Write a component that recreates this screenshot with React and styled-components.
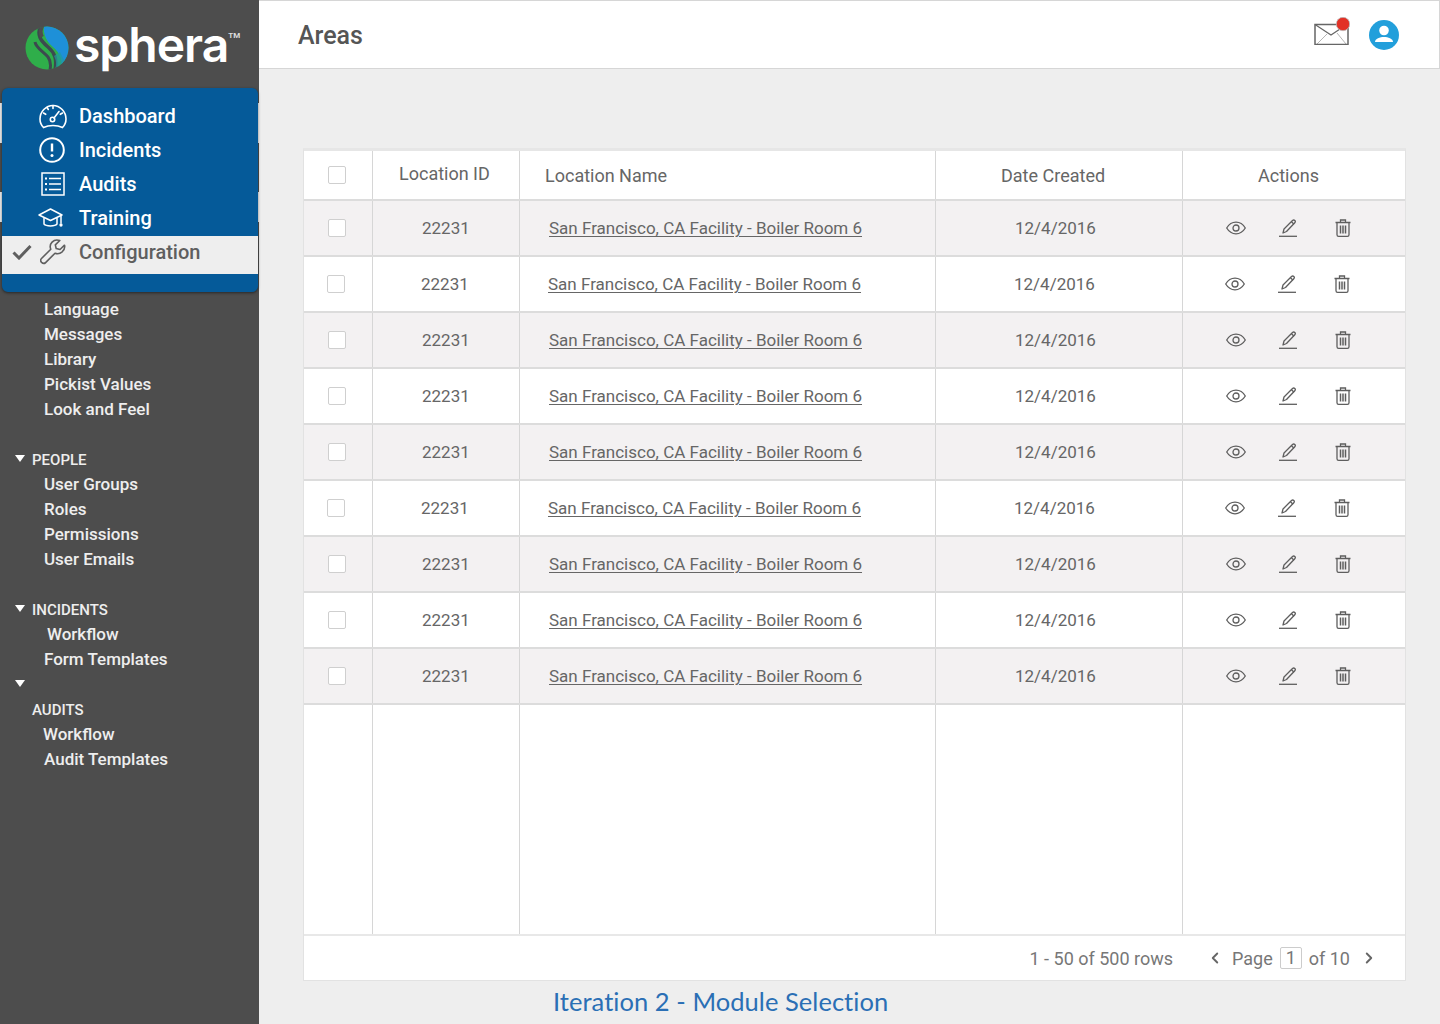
import React from "react";
import styled, { createGlobalStyle } from "styled-components";
import { ChevronLeft, ChevronRight } from "lucide-react";

const GlobalStyle = createGlobalStyle`
  html, body {
    margin: 0;
    padding: 0;
    background: #eeeeee;
    font-family: Roboto, "Liberation Sans", sans-serif;
  }
  * {
    box-sizing: border-box;
  }
`;

const Page = styled.div`
  display: flex;
  width: 1440px;
  height: 1024px;
  overflow: hidden;
  background: #eeeeee;
`;

const Sidebar = styled.aside`
  flex: 0 0 259px;
  background: #4d4d4d;
  color: #f0f0f0;
`;

const LogoBar = styled.div`
  display: flex;
  align-items: center;
  height: 88px;
  padding: 7px 0 0 25px;
`;

const LogoWord = styled.span`
  margin: -6px 0 0 5px;
  font-family: Inter, sans-serif;
  font-size: 48px;
  font-weight: 600;
  letter-spacing: -1px;
  line-height: 60px;
  color: #ffffff;
`;

const LogoMark = styled.sup`
  align-self: flex-start;
  margin: 24px 0 0 0;
  font-size: 8px;
  font-weight: 700;
  line-height: 10px;
  color: #dddddd;
`;

const MenuBack = styled.div`
  padding: 0 1px 0 2px;
  background: linear-gradient(
    to bottom,
    #4d4d4d 0 15px,
    #eeeeee 15px 55px,
    #4d4d4d 55px 104px,
    #eeeeee 104px 134px,
    #4d4d4d 134px
  );
`;

const MainMenu = styled.nav`
  height: 204px;
  padding-top: 11px;
  border-radius: 6px;
  background: #055a99;
  box-shadow: 0 1px 3px rgba(0, 0, 0, 0.5);
`;

const MenuItem = styled.a`
  display: flex;
  align-items: center;
  height: ${(props) => (props.$active ? "38px" : "34px")};
  margin-top: ${(props) => (props.$active ? "1px" : "0")};
  padding-bottom: ${(props) => (props.$active ? "6px" : "0")};
  background: ${(props) => (props.$active ? "#eeeeee" : "transparent")};
  color: ${(props) => (props.$active ? "#5f5f5f" : "#ffffff")};
  font-size: 20px;
  font-weight: 500;
`;

const CheckSlot = styled.span`
  display: flex;
  justify-content: center;
  width: 36px;
  padding-left: 4px;
`;

const MenuIcon = styled.span`
  display: flex;
  align-items: center;
  justify-content: center;
  width: 30px;
  margin-right: 11px;
`;

const SubNav = styled.div`
  padding-top: 5px;
`;

const SubGroup = styled.div`
  margin-bottom: ${(props) => (props.$tight ? "0" : "25px")};
`;

const SubItem = styled.a`
  display: block;
  height: 25px;
  padding-left: ${(props) => props.$indent || 44}px;
  font-size: 17px;
  font-weight: 500;
  line-height: 25px;
  color: #eeeeee;
`;

const GroupHead = styled.div`
  display: flex;
  align-items: center;
  height: 25px;
  padding-left: 15px;
  font-size: 15px;
  font-weight: 500;
  color: #eeeeee;
`;

const Caret = styled.span`
  flex: 0 0 auto;
  width: 0;
  height: 0;
  margin: -3px 7px 0 0;
  border-left: 5px solid transparent;
  border-right: 5px solid transparent;
  border-top: 7px solid #ffffff;
`;

const CaretGap = styled.span`
  flex: 0 0 17px;
`;

const Main = styled.main`
  display: flex;
  flex: 1;
  flex-direction: column;
  min-width: 0;
`;

const TopBar = styled.header`
  display: flex;
  align-items: center;
  justify-content: space-between;
  height: 69px;
  padding: 0 40px 0 39px;
  background: #ffffff;
  border: 1px solid #d6d6d6;
  border-left: 0;
`;

const Title = styled.h1`
  margin: 1px 0 0;
  font-size: 25px;
  font-weight: 500;
  color: #555555;
`;

const TopIcons = styled.div`
  display: flex;
  align-items: center;
  gap: 19px;
`;

const MailSlot = styled.span`
  display: flex;
  margin-bottom: 8px;
`;

const Content = styled.div`
  flex: 1;
  padding: 79px 34px 0 44px;
`;

const TableCard = styled.section`
  display: flex;
  flex-direction: column;
  height: 833px;
  background: #ffffff;
  border: 1px solid #e2e2e2;
  border-top: 3px solid #e6e6e6;
`;

const columns = "69px 147px 416px 247px 1fr";

const HeadRow = styled.div`
  display: grid;
  grid-template-columns: ${columns};
  flex: 0 0 50px;
  border-bottom: 2px solid #dcdcdc;
`;

const BodyRow = styled.div`
  display: grid;
  grid-template-columns: ${columns};
  flex: 0 0 56px;
  background: ${(props) => (props.$shade ? "#f3f1f2" : "#ffffff")};
  border-bottom: 2px solid #dcdcdc;
`;

const FillRow = styled.div`
  display: grid;
  grid-template-columns: ${columns};
  flex: 1;
  border-bottom: 2px solid #e8e8e8;
`;

const Cell = styled.div`
  display: flex;
  align-items: center;
  padding-left: ${(props) => props.$pad - (props.$shift || 0)}px;
  padding-bottom: ${(props) => props.$lift || 0}px;
  border-right: 1px solid #d6d6d6;
  font-size: ${(props) => (props.$head ? "18px" : "17px")};
  color: #666666;

  &:last-child {
    border-right: 0;
  }
`;

const Check = styled.span`
  display: block;
  width: 18px;
  height: 18px;
  background: #ffffff;
  border: 1px solid #cfcfcf;
  border-radius: 2px;
`;

const NameLink = styled.a`
  color: #666666;
  text-decoration: underline;
  text-underline-offset: 2px;
  text-decoration-thickness: 1px;
`;

const ActionIcons = styled.div`
  display: flex;
  align-items: center;
`;

const ActionGap = styled.span`
  width: ${(props) => props.$width}px;
`;

const Footer = styled.div`
  display: flex;
  flex: 0 0 44px;
  align-items: center;
  justify-content: flex-end;
  padding-right: 27px;
  font-size: 18px;
  color: #777777;
`;

const RowCount = styled.span`
  margin-right: 33px;
`;

const PageNum = styled.span`
  display: inline-block;
  width: 22px;
  height: 22px;
  margin: 0 7px;
  border: 1px solid #cccccc;
  border-radius: 2px;
  line-height: 20px;
  text-align: center;
`;

const Pager = styled.div`
  display: flex;
  align-items: center;
`;

const PagerArrow = styled.span`
  display: flex;
  margin: ${(props) => (props.$next ? "0 0 0 10px" : "0 8px 0 0")};
  color: #666666;
`;

const Caption = styled.div`
  padding: 5px 0 0 250px;
  font-family: Lato, sans-serif;
  font-size: 25.5px;
  letter-spacing: 0.05px;
  color: #2a6fb5;
`;

function Globe() {
  return (
    <svg width="44" height="44" viewBox="0 0 44 44">
      <defs>
        <clipPath id="globeClip">
          <circle cx="22" cy="22" r="21.500" />
        </clipPath>
      </defs>
      <g clipPath="url(#globeClip)">
        <rect width="44" height="44" fill="#2fae4a" />
        <path d="M19 0h25v44h-8c2-10-1-17-8-23-6-5-10-12-9-21z" fill="#1e90d8" />
        <path d="M16 -1C11 9 16 15 23 21c7 6 9 12 7 23" fill="none" stroke="#3c4a4f" strokeWidth="3.500" />
        <path d="M10 16c1 6 8 9 13 15 3 4 3 8 2 13" fill="none" stroke="#3c4a4f" strokeWidth="3" />
        <path d="M18 -2c-3 6-3 9-1 13" fill="none" stroke="#4d4d4d" strokeWidth="4" />
        <path d="M30 44c2-6 1-10-1-14l6-4 9 18z" fill="#1f9aa0" opacity="0.7" />
      </g>
    </svg>
  );
}

function GaugeIcon() {
  return (
    <svg width="28" height="25" viewBox="0 0 28 25" fill="none" stroke="#fff" strokeWidth="1.600" strokeLinecap="round">
      <path d="M4.500 23.500C2.300 21.300 1 18.300 1 15 1 7.800 6.800 1.500 14 1.500S27 7.800 27 15c0 3.300-1.300 6.300-3.500 8.500C21 22.300 17.700 21.500 14 21.500s-7 .8-9.500 2z" />
      <circle cx="13.500" cy="15.500" r="2.200" />
      <path d="M15 14 20 7.500M14 1.500v3M4.500 9l2.200 1.300M23.500 9l-2.200 1.300M8 3.500l1.300 2" />
    </svg>
  );
}

function AlertIcon() {
  return (
    <svg width="28" height="26" viewBox="0 0 28 26" fill="none" stroke="#fff" strokeWidth="2">
      <circle cx="13" cy="13" r="11.800" />
      <path d="M13 6.500v8" strokeWidth="2.400" />
      <circle cx="13" cy="18.500" r="1.500" fill="#fff" stroke="none" />
    </svg>
  );
}

function ListIcon() {
  return (
    <svg width="24" height="24" viewBox="0 0 24 24" fill="none" stroke="#fff" strokeWidth="1.500">
      <rect x="1" y="1" width="22" height="22" />
      <path d="M8 6.500h12M8 12h12M8 17.500h12" />
      <path d="M4 6.500h2M4 12h2M4 17.500h2" strokeWidth="2" />
    </svg>
  );
}

function CapIcon() {
  return (
    <svg width="30" height="20" viewBox="0 0 30 20" fill="none" stroke="#fff" strokeWidth="1.500" strokeLinejoin="round">
      <path d="M1 7 12.500 1 24 7l-11.500 5.500z" />
      <path d="M6 10v6c2 2.500 11 2.500 13 0v-6" />
      <path d="M23 7.500v8" />
      <circle cx="23" cy="17" r="0.900" fill="#fff" />
    </svg>
  );
}

function WrenchIcon() {
  return (
    <svg width="26" height="26" viewBox="0 0 26 26" fill="none" stroke="#5f5f5f" strokeWidth="1.600" strokeLinejoin="round">
      <path d="M24.500 6.200 20 10.500l-3.800-1-.9-3.600L19.800 1.500c-2.800-1-5.800-.4-7.700 1.600-1.900 2-2.300 4.800-1.300 7.100L1.500 19.500c-1 1-1 2.700.1 3.900 1.200 1.200 3 1.200 4 .2l9.400-9.400c2.300.9 5.100.5 7.200-1.400 2-2 2.800-4.800 2.300-6.600z" />
    </svg>
  );
}

function CheckMark() {
  return (
    <svg width="20" height="16" viewBox="0 0 20 16" fill="none" stroke="#5f5f5f" strokeWidth="3">
      <path d="M1.500 8.500 7 14 18.500 2" />
    </svg>
  );
}

function MailIcon() {
  return (
    <svg width="36" height="28" viewBox="0 0 36 28">
      <path d="M3 27 13 17M32 27 23 16" fill="none" stroke="#b5b5b5" strokeWidth="1" />
      <path d="M1 7.500h33v20H1z" fill="none" stroke="#666" strokeWidth="1.500" />
      <path d="M1 7.500 17 18l12-8" fill="none" stroke="#666" strokeWidth="1.200" />
      <circle cx="29" cy="7" r="6.700" fill="#e23126" stroke="#bbb" strokeWidth="0.800" />
    </svg>
  );
}

function UserIcon() {
  return (
    <svg width="30" height="30" viewBox="0 0 30 30">
      <circle cx="15" cy="15" r="15" fill="#229fdb" />
      <circle cx="15" cy="10.500" r="4.800" fill="#fff" />
      <path d="M6 22c0-3.500 5-5 9-5s9 1.500 9 5z" fill="#fff" />
    </svg>
  );
}

function EyeIcon() {
  return (
    <svg width="20" height="14" viewBox="0 0 20 14" fill="none" stroke="#5e5e5e" strokeWidth="1.300">
      <path d="M.7 7C3 3.200 6.300 1.200 10 1.200S17 3.200 19.300 7C17 10.800 13.700 12.800 10 12.800S3 10.800.7 7z" />
      <circle cx="10" cy="7" r="3" />
    </svg>
  );
}

function PencilIcon() {
  return (
    <svg width="18" height="18" viewBox="0 0 18 18" fill="none" stroke="#5e5e5e" strokeWidth="1.300" strokeLinejoin="round">
      <path d="M4 14 5 10 13.500 1.500c.7-.6 1.700-.6 2.300 0 .6.600.6 1.600 0 2.200L7.500 12.500z" />
      <path d="M12.500 2.800 15 5.200" />
      <path d="M0 17.300h18" />
    </svg>
  );
}

function TrashIcon() {
  return (
    <svg width="16" height="18" viewBox="0 0 16 18" fill="none" stroke="#5e5e5e" strokeWidth="1.300">
      <path d="M.5 3.500h15M5.500 3.500V1h5v2.500" />
      <path d="M2 3.500v12.200c0 1 .7 1.600 1.600 1.600h8.800c.9 0 1.600-.6 1.600-1.600V3.500" />
      <path d="M5.500 6.500v8M8 6.500v8M10.500 6.500v8" strokeWidth="1.500" />
    </svg>
  );
}

const subGroups = [
  { items: [["Language"], ["Messages"], ["Library"], ["Pickist Values"], ["Look and Feel"]] },
  { head: "PEOPLE", caret: true, items: [["User Groups"], ["Roles"], ["Permissions"], ["User Emails"]] },
  { head: "INCIDENTS", caret: true, tight: true, items: [["Workflow", 47], ["Form Templates"]] },
  { loneCaret: true, tight: true, items: [] },
  { head: "AUDITS", items: [["Workflow", 43], ["Audit Templates"]] },
];

const menu = [
  ["Dashboard", <GaugeIcon />],
  ["Incidents", <AlertIcon />],
  ["Audits", <ListIcon />],
  ["Training", <CapIcon />],
];

// the mock has rows 2 and 6 sitting one pixel to the left
const rows = [0, 1, 0, 0, 0, 1, 0, 0, 0];

export default function App() {
  return (
    <Page>
      <GlobalStyle />
      <Sidebar>
        <LogoBar>
          <Globe />
          <LogoWord>sphera</LogoWord>
          <LogoMark>TM</LogoMark>
        </LogoBar>
        <MenuBack>
          <MainMenu>
            {menu.map(([label, icon]) => (
              <MenuItem key={label}>
                <CheckSlot />
                <MenuIcon>{icon}</MenuIcon>
                {label}
              </MenuItem>
            ))}
            <MenuItem $active>
              <CheckSlot>
                <CheckMark />
              </CheckSlot>
              <MenuIcon>
                <WrenchIcon />
              </MenuIcon>
              Configuration
            </MenuItem>
          </MainMenu>
        </MenuBack>
        <SubNav>
          {subGroups.map((group, i) => (
            <SubGroup key={i} $tight={group.tight}>
              {group.head && (
                <GroupHead>
                  {group.caret ? <Caret /> : <CaretGap />}
                  {group.head}
                </GroupHead>
              )}
              {group.loneCaret && (
                <GroupHead>
                  <Caret />
                </GroupHead>
              )}
              {group.items.map(([label, indent]) => (
                <SubItem key={label} $indent={indent}>
                  {label}
                </SubItem>
              ))}
            </SubGroup>
          ))}
        </SubNav>
      </Sidebar>
      <Main>
        <TopBar>
          <Title>Areas</Title>
          <TopIcons>
            <MailSlot>
              <MailIcon />
            </MailSlot>
            <UserIcon />
          </TopIcons>
        </TopBar>
        <Content>
          <TableCard>
            <HeadRow>
              <Cell $pad={24}>
                <Check />
              </Cell>
              <Cell $head $pad={26} $lift={3}>
                Location ID
              </Cell>
              <Cell $head $pad={25}>
                Location Name
              </Cell>
              <Cell $head $pad={65}>
                Date Created
              </Cell>
              <Cell $head $pad={75}>
                Actions
              </Cell>
            </HeadRow>
            {rows.map((shift, i) => (
              <BodyRow key={i} $shade={i % 2 === 0}>
                <Cell $pad={24} $shift={shift}>
                  <Check />
                </Cell>
                <Cell $pad={49} $shift={shift}>
                  22231
                </Cell>
                <Cell $pad={29} $shift={shift}>
                  <NameLink>San Francisco, CA Facility - Boiler Room 6</NameLink>
                </Cell>
                <Cell $pad={79} $shift={shift}>
                  12/4/2016
                </Cell>
                <Cell $pad={43} $shift={shift}>
                  <ActionIcons>
                    <EyeIcon />
                    <ActionGap $width={33} />
                    <PencilIcon />
                    <ActionGap $width={38} />
                    <TrashIcon />
                  </ActionIcons>
                </Cell>
              </BodyRow>
            ))}
            <FillRow>
              <Cell />
              <Cell />
              <Cell />
              <Cell />
              <Cell />
            </FillRow>
            <Footer>
              <RowCount>1 - 50 of 500 rows</RowCount>
              <Pager>
                <PagerArrow>
                  <ChevronLeft size={18} strokeWidth={2.5} />
                </PagerArrow>
                <span>Page</span>
                <PageNum>1</PageNum>
                <span>of 10</span>
                <PagerArrow $next>
                  <ChevronRight size={18} strokeWidth={2.5} />
                </PagerArrow>
              </Pager>
            </Footer>
          </TableCard>
          <Caption>Iteration 2 - Module Selection</Caption>
        </Content>
      </Main>
    </Page>
  );
}
